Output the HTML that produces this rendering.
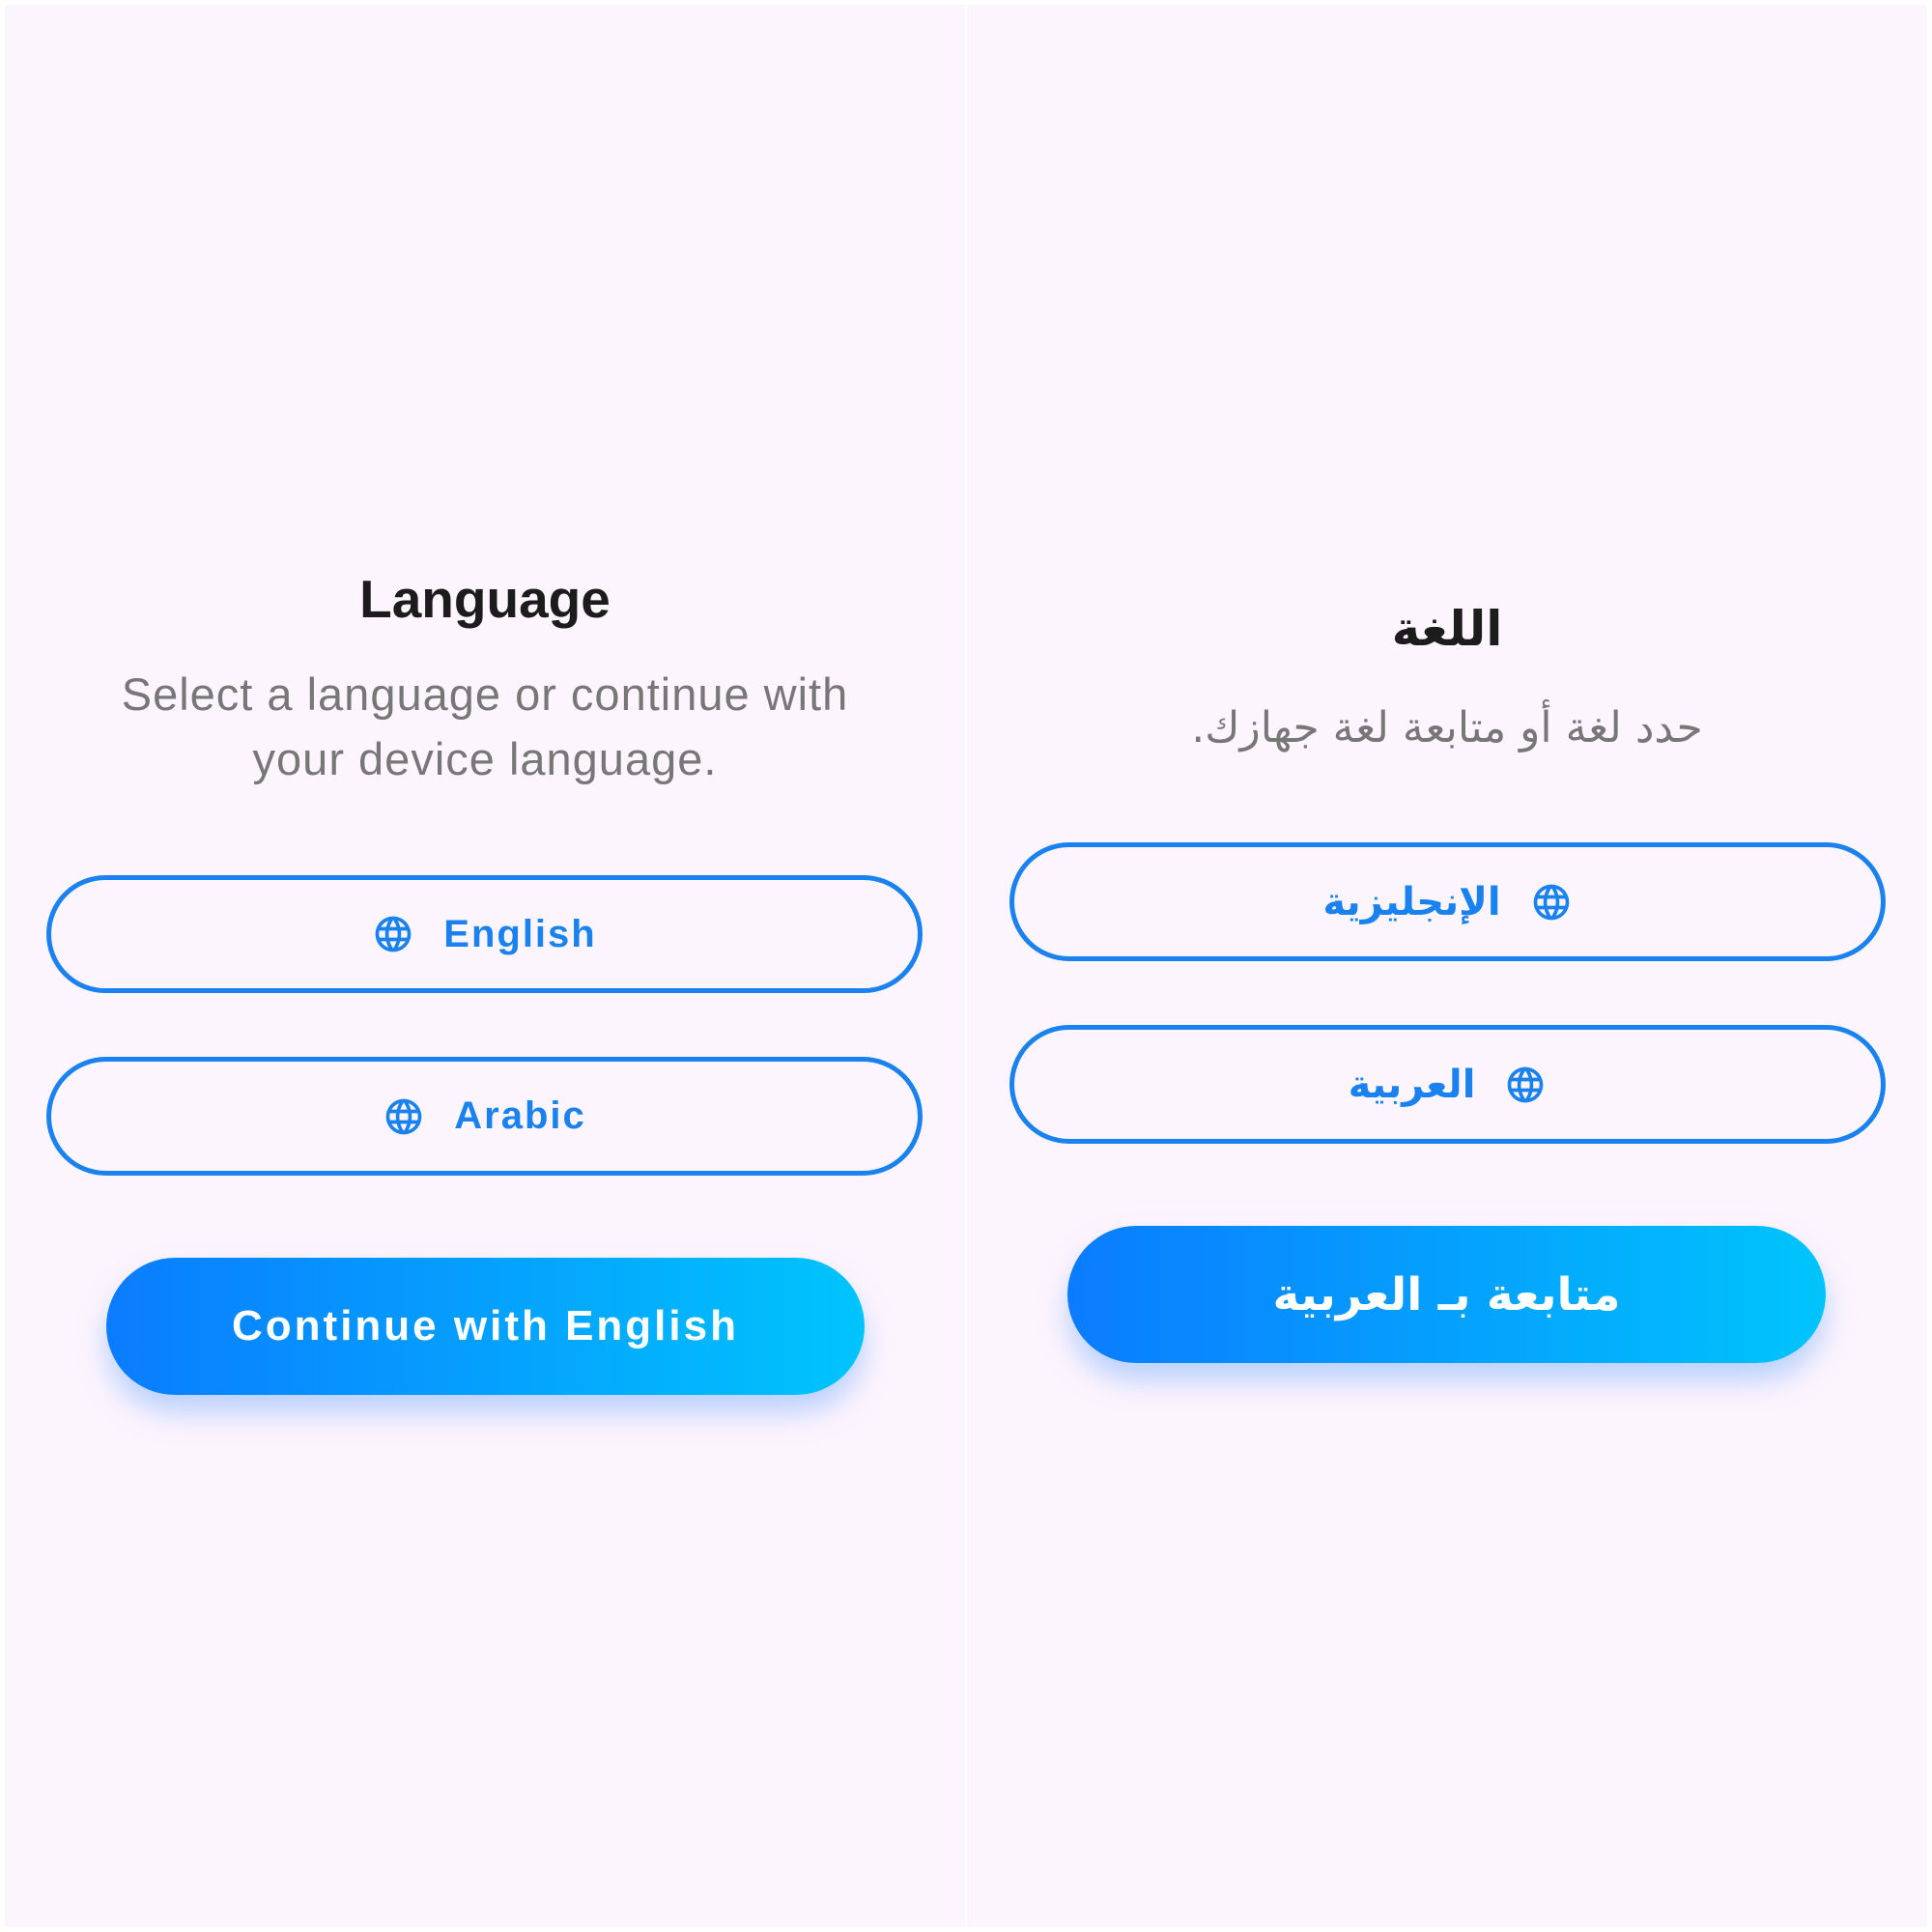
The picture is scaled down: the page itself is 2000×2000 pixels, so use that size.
<!DOCTYPE html>
<html><head><meta charset="utf-8"><style>
*{margin:0;padding:0;box-sizing:border-box}
body{width:2000px;height:2000px;background:#fff;position:relative;overflow:hidden;font-family:"Liberation Sans",sans-serif}
.panel{position:absolute;top:5px;height:1990px;background:#fdf5fd}
.a{position:absolute;white-space:nowrap;text-align:center}
.btn{position:absolute;border:5px solid #1a82ee;border-radius:70px;display:flex;align-items:center;justify-content:center;gap:30px;color:#1a82ee;font-weight:bold;font-size:40px;letter-spacing:2px}
.cta{position:absolute;border-radius:80px;background:linear-gradient(90deg,#0a7cff,#00c4fc);box-shadow:0 18px 30px rgba(60,140,255,.35);display:flex;align-items:center;justify-content:center;color:#fff;font-weight:bold;font-size:44px;letter-spacing:3px}
.ar{font-family:"DejaVu Sans",sans-serif;letter-spacing:0}
svg{width:44px;height:44px;fill:#1a82ee}
</style></head><body>
<div class="panel" style="left:5px;width:994px"></div>
<div class="panel" style="left:1001px;width:994px"></div>

<div class="a" style="left:5px;width:994px;top:588px;font-size:55px;font-weight:bold;color:#1c1c1c">Language</div>
<div class="a" style="left:5px;width:994px;top:685px;font-size:47px;line-height:67px;color:#777;letter-spacing:1px">Select a language or continue with<br>your device language.</div>

<div class="btn" style="left:48px;top:906px;width:907px;height:122px"><svg viewBox="0 0 24 24"><path id="g" d="M11.99 2C6.47 2 2 6.48 2 12s4.47 10 9.990 10C17.52 22 22 17.52 22 12S17.52 2 11.99 2zm6.93 6h-2.95c-.32-1.25-.78-2.45-1.38-3.56 1.84.63 3.37 1.91 4.33 3.56zM12 4.04c.83 1.2 1.48 2.53 1.91 3.96h-3.82c.43-1.43 1.08-2.76 1.91-3.96zM4.26 14C4.1 13.36 4 12.69 4 12s.1-1.36.26-2h3.38c-.08.66-.14 1.32-.14 2 0 .68.06 1.34.14 2H4.26zm.82 2h2.95c.32 1.25.78 2.45 1.38 3.56-1.84-.63-3.37-1.9-4.33-3.56zm2.95-8H5.08c.96-1.66 2.49-2.93 4.33-3.56C8.81 5.55 8.35 6.75 8.03 8zM12 19.96c-.83-1.2-1.48-2.53-1.91-3.96h3.82c-.43 1.43-1.08 2.76-1.91 3.96zM14.34 14H9.66c-.09-.66-.16-1.32-.16-2 0-.68.07-1.35.16-2h4.68c.09.65.16 1.32.16 2 0 .68-.07 1.34-.16 2zm.25 5.56c.6-1.11 1.06-2.31 1.38-3.56h2.95c-.96 1.65-2.49 2.93-4.33 3.56zM16.36 14c.08-.66.14-1.32.14-2 0-.68-.06-1.34-.14-2h3.38c.16.64.26 1.31.26 2s-.1 1.36-.26 2h-3.38z"/></svg><span>English</span></div>
<div class="btn" style="left:48px;top:1094px;width:907px;height:123px"><svg viewBox="0 0 24 24"><use href="#g"/></svg><span>Arabic</span></div>
<div class="cta" style="left:110px;top:1302px;width:785px;height:142px">Continue with English</div>

<div class="a ar" dir="rtl" style="left:1001px;width:994px;top:622px;font-size:50px;font-weight:bold;color:#1c1c1c">اللغة</div>
<div class="a ar" dir="rtl" style="left:1001px;width:994px;top:728px;font-size:44px;color:#777">حدد لغة أو متابعة لغة جهازك.</div>

<div class="btn ar" dir="rtl" style="left:1045px;top:872px;width:907px;height:123px"><svg viewBox="0 0 24 24"><use href="#g"/></svg><span>الإنجليزية</span></div>
<div class="btn ar" dir="rtl" style="left:1045px;top:1061px;width:907px;height:123px"><svg viewBox="0 0 24 24"><use href="#g"/></svg><span>العربية</span></div>
<div class="cta ar" dir="rtl" style="left:1105px;top:1269px;width:785px;height:142px;font-size:47px">متابعة بـ العربية</div>
</body></html>
